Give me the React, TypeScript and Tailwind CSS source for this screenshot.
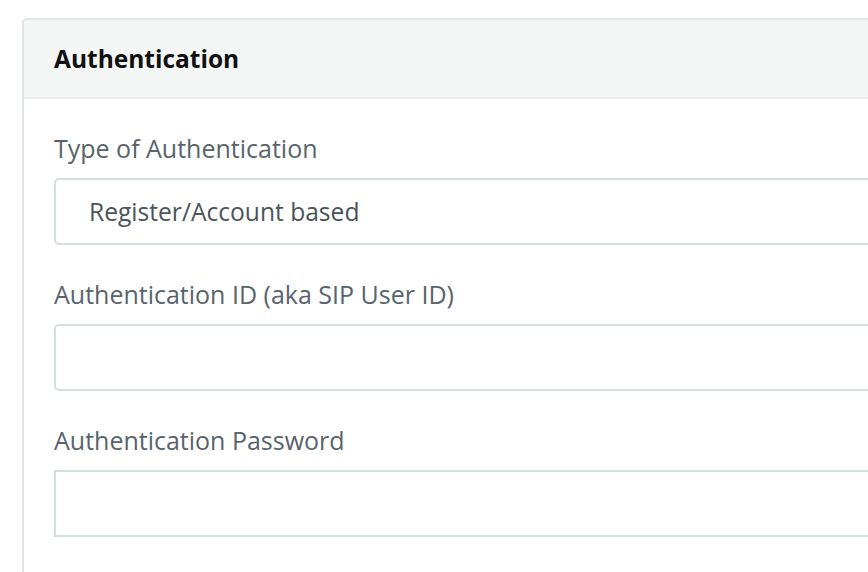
import React from "react";

const FIELDS = [
  { label: "Type of Authentication", value: "Register/Account based", rounded: true },
  { label: "Authentication ID (aka SIP User ID)", value: "", rounded: true },
  { label: "Authentication Password", value: "", rounded: false },
];

export default function App() {
  return (
    <div className="h-screen bg-white pt-[18px] pl-[22px] overflow-hidden" style={{ fontFamily: "'Open Sans', 'Noto Sans', sans-serif" }}>
      <div className="w-[900px] h-[600px] border-2 border-[#e1e6e8] rounded-[5px] bg-white">
        {/* Header */}
        <div className="h-[79px] flex items-center pl-[30px] pt-[2px] bg-[#f4f6f6] border-b-2 border-[#eaeeee] rounded-t-[4px]">
          <span className="text-[24.5px] font-bold text-[#111]">Authentication</span>
        </div>

        {/* Body */}
        <div className="pt-[32px] pl-[30px] flex flex-col">
          {FIELDS.map(f => (
            <div key={f.label} className="flex flex-col mb-[32px]">
              <label className="h-[34px] leading-[34px] text-[25px] text-[#58646c] mb-[13px]">{f.label}</label>
              <div className={`h-[67px] border-2 border-[#d6dddf] flex items-center pl-[33px] pt-[2px] text-[24.6px] text-[#4b5459] ${f.rounded ? "rounded-[5px]" : ""}`}>
                {f.value}
              </div>
            </div>
          ))}
        </div>
      </div>
    </div>
  );
}
